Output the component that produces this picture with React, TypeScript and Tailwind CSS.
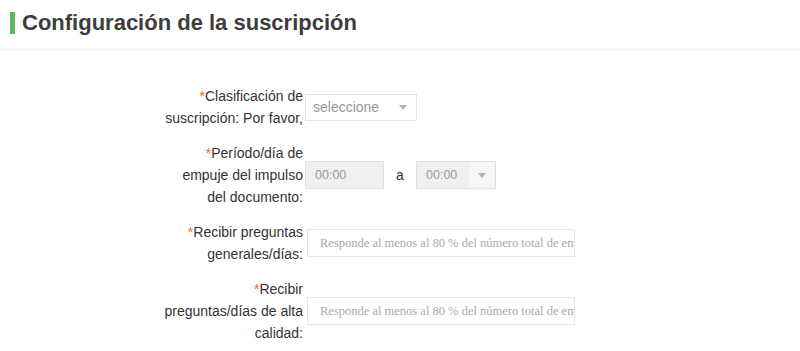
import React from "react";

function Arrow() {
  return (
    <svg className="w-[8px] h-[5px]" viewBox="0 0 8 5">
      <path d="M0 0h8L4 5z" fill="#b3b3b3" />
    </svg>
  );
}

function Label({ lines }: { lines: string[] }) {
  return (
    <div className="w-[140px] flex flex-col items-end text-[14px] leading-[22px] text-[#333]">
      {lines.map((l, i) => (
        <div key={i} className="whitespace-nowrap">
          {i === 0 && <span className="text-[#f60]">*</span>}
          {l}
        </div>
      ))}
    </div>
  );
}

const placeholder = "Responde al menos al 80 % del número total de empleados";

export default function App() {
  return (
    <div
      className="w-[800px] h-[351px] bg-white overflow-hidden"
      style={{ fontFamily: '"Liberation Sans", Arial, sans-serif' }}
    >
      <div className="h-[50px] border-b border-[#eeeeee] flex items-center pl-[10px] pb-[4px]">
        <div className="w-[5px] h-[22px] bg-[#5cb85c] mr-[7px]" />
        <h1 className="text-[22px] font-bold text-[#3d3d3d]">Configuración de la suscripción</h1>
      </div>

      <div className="pl-[163px] pt-[35px] flex flex-col gap-[13px]">
        <div className="flex items-center">
          <Label lines={["Clasificación de", "suscripción: Por favor,"]} />
          <div className="ml-[2px] w-[112px] h-[27px] border border-[#e3e3e3] bg-white flex items-center justify-between pl-[7px] pr-[9px] text-[14px] text-[#999]">
            <span>seleccione</span>
            <Arrow />
          </div>
        </div>

        <div className="flex items-center">
          <Label lines={["Período/día de", "empuje del impulso", "del documento:"]} />
          <div className="ml-[2px] w-[79px] h-[28px] border border-[#e0e0e0] bg-[#f0f0f0] flex items-center pl-[9px] text-[12.5px] text-[#999]">
            00:00
          </div>
          <span className="w-[32px] text-center text-[14px] text-[#333]">a</span>
          <div className="w-[80px] h-[28px] border border-[#e0e0e0] bg-[#f0f0f0] flex items-center text-[12.5px] text-[#999]">
            <span className="flex-1 pl-[9px]">00:00</span>
            <div className="w-[26px] h-full bg-[#f6f6f6] flex items-center justify-center">
              <Arrow />
            </div>
          </div>
        </div>

        <div className="flex items-center">
          <Label lines={["Recibir preguntas", "generales/días:"]} />
          <div
            className="ml-[4px] w-[268px] h-[28px] border border-[#e6e6e6] bg-white flex items-center pl-[12px] text-[12.5px] text-[#aaa] whitespace-nowrap overflow-hidden"
            style={{ fontFamily: '"Liberation Serif", "Times New Roman", serif' }}
          >
            {placeholder}
          </div>
        </div>

        <div className="flex items-center">
          <Label lines={["Recibir", "preguntas/días de alta", "calidad:"]} />
          <div
            className="ml-[4px] w-[268px] h-[28px] border border-[#e6e6e6] bg-white flex items-center pl-[12px] text-[12.5px] text-[#aaa] whitespace-nowrap overflow-hidden"
            style={{ fontFamily: '"Liberation Serif", "Times New Roman", serif' }}
          >
            {placeholder}
          </div>
        </div>
      </div>
    </div>
  );
}
